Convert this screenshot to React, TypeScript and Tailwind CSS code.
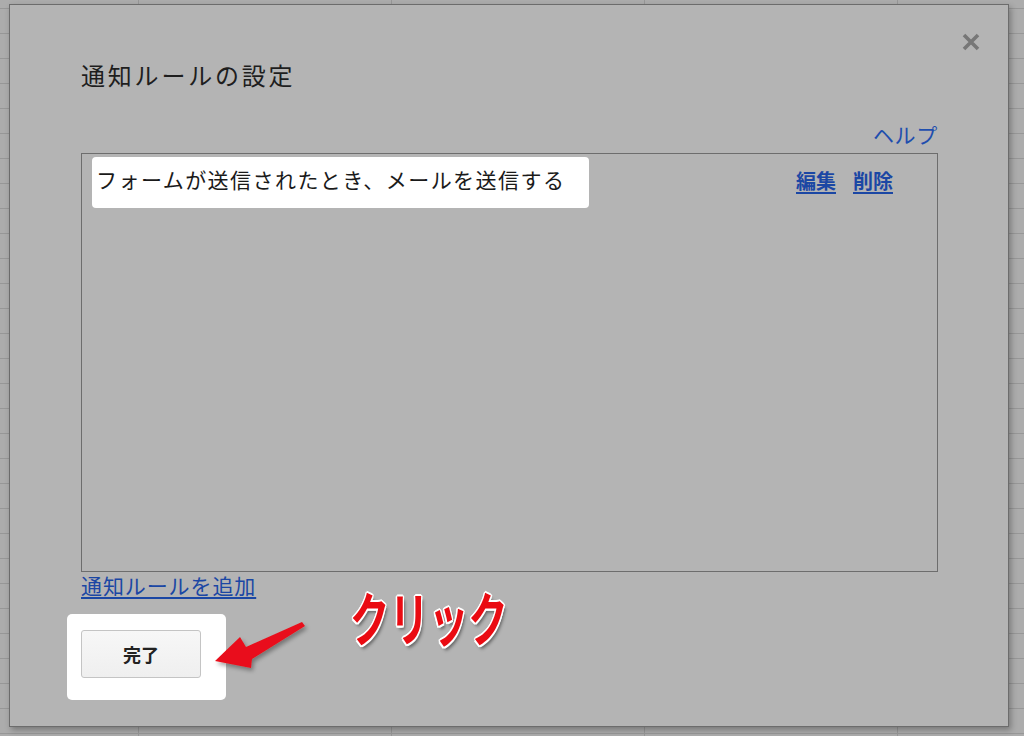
const jp = "font-['Noto_Sans_CJK_JP','Noto_Sans',sans-serif]";

function CloseIcon() {
  return (
    <svg width="18" height="18" viewBox="0 0 18 18" className="block">
      <path d="M2 2 L16 16 M16 2 L2 16" stroke="#777" strokeWidth="3.6" strokeLinecap="butt" />
    </svg>
  );
}

function RedArrow() {
  return (
    <svg width="110" height="66" viewBox="0 0 110 66" className="block">
      <defs>
        <filter id="arrowShadow" x="-20%" y="-20%" width="140%" height="150%">
          <feDropShadow dx="2" dy="3" stdDeviation="2" floodColor="#000" floodOpacity="0.35" />
        </filter>
      </defs>
      <polygon
        points="10,49 35,25 41,35 97,10 100,14 47,47 46,56"
        fill="#e9111a"
        filter="url(#arrowShadow)"
      />
    </svg>
  );
}

export default function App() {
  return (
    <div
      className={`${jp} h-[736px] w-[1024px] overflow-hidden bg-[#acacac] bg-[linear-gradient(to_bottom,#979797_1px,transparent_1px),linear-gradient(to_right,#979797_1px,transparent_1px)] bg-size-[100%_25px,253px_100%] bg-position-[0_8px,138px_0] pl-[9px] pt-[4px]`}
    >
      <div className="relative flex h-[723px] w-[1000px] flex-col border border-[#6c6c6c] bg-[#b4b4b4] pl-[71px] pr-[70px] pt-[55px] shadow-[2px_3px_6px_rgba(0,0,0,0.3)]">
        <button type="button" className="absolute right-[28px] top-[28px]">
          <CloseIcon />
        </button>

        <h1 className="text-[24px] leading-[30px] tracking-[2.8px] text-[#1e1e1e]">通知ルールの設定</h1>

        <div className="mt-[31px] flex justify-end">
          <a className="text-[21px] leading-[26px] tracking-[0.7px] text-[#1f4eae]">ヘルプ</a>
        </div>

        <div className="mt-[6px] h-[419px] border border-[#6d6d6d]">
          <div className="flex items-center justify-between pl-[10px] pr-[44px] pt-[3px]">
            <div className="flex h-[51px] w-[497px] items-center rounded-[4px] bg-white px-[4px] pb-[5px]">
              <span className="text-[21px] tracking-[1.45px] text-[#1a1a1a]">
                フォームが送信されたとき、メールを送信する
              </span>
            </div>
            <div className="mb-[4px] flex gap-[17px] text-[20px] font-bold text-[#1b47a4]">
              <a className="underline underline-offset-[3px]">編集</a>
              <a className="underline underline-offset-[3px]">削除</a>
            </div>
          </div>
        </div>

        <div>
          <a className="text-[21px] leading-[26px] tracking-[0.9px] text-[#1b47a4] underline underline-offset-[3px]">
            通知ルールを追加
          </a>
        </div>

        <div className="ml-[-14px] mt-[15px] h-[86px] w-[159px] rounded-[5px] bg-white pl-[14px] pt-[16px]">
          <button
            type="button"
            className="flex h-[48px] w-[120px] items-center justify-center rounded-[3px] border border-[#c4c4c4] bg-[linear-gradient(#f7f7f7,#efefef)] text-[18px] font-bold text-[#222]"
          >
            完了
          </button>
        </div>

        <div className="absolute left-[195px] top-[607px]">
          <RedArrow />
        </div>

        <div className="absolute left-[340px] top-[582px] origin-left scale-x-[0.68] whitespace-nowrap text-[58px] font-bold leading-[58px] text-[#ea0b12] [text-shadow:2px_0_0_#fff,-2px_0_0_#fff,0_2px_0_#fff,0_-2px_0_#fff,1.5px_1.5px_0_#fff,-1.5px_-1.5px_0_#fff,1.5px_-1.5px_0_#fff,-1.5px_1.5px_0_#fff,3px_4px_4px_rgba(0,0,0,0.45)]">
          クリック
        </div>
      </div>
    </div>
  );
}
